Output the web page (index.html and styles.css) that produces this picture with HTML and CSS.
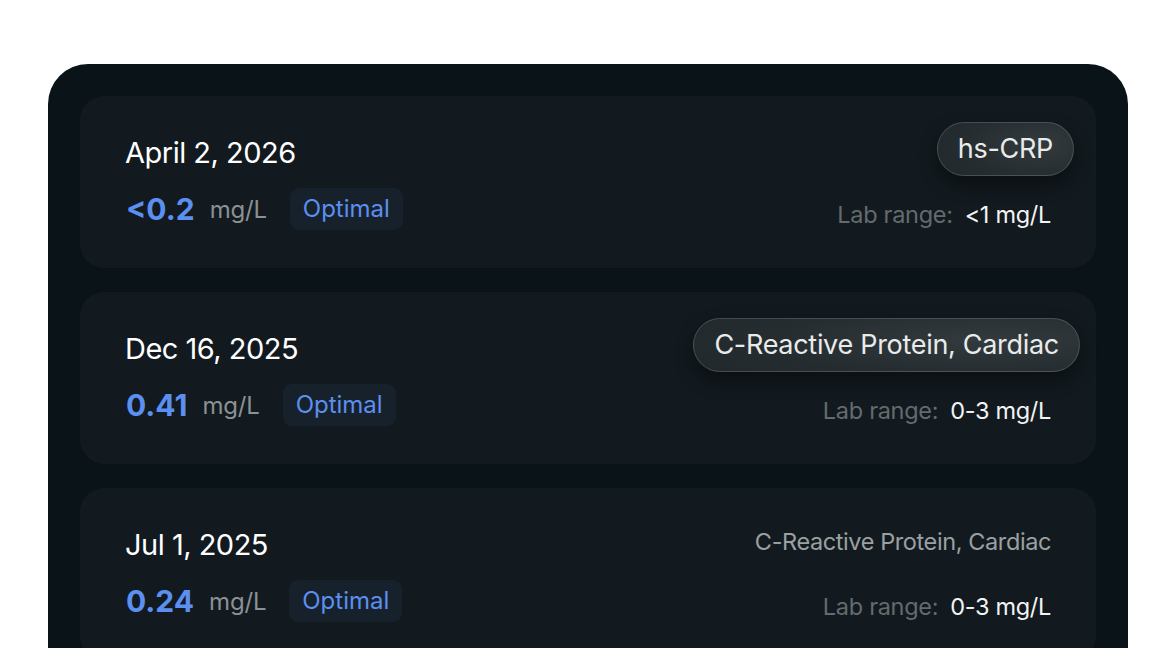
FILE: index.html
```html
<!DOCTYPE html>
<html lang="en">
<head>
<meta charset="utf-8">
<title>hs-CRP history</title>
<link rel="stylesheet" href="styles.css">
</head>
<body>
<main class="panel">
  <section class="card">
    <div class="left">
      <div class="date">April 2, 2026</div>
      <div class="reading">
        <span class="value">&lt;0.2</span>
        <span class="unit">mg/L</span>
        <span class="status">Optimal</span>
      </div>
    </div>
    <div class="right">
      <div class="name-slot"><span class="pill pill-short">hs-CRP</span></div>
      <div class="range"><span class="range-label">Lab range:</span><span class="range-value">&lt;1 mg/L</span></div>
    </div>
  </section>
  <section class="card">
    <div class="left">
      <div class="date">Dec 16, 2025</div>
      <div class="reading">
        <span class="value">0.41</span>
        <span class="unit">mg/L</span>
        <span class="status">Optimal</span>
      </div>
    </div>
    <div class="right">
      <div class="name-slot"><span class="pill pill-long">C-Reactive Protein, Cardiac</span></div>
      <div class="range"><span class="range-label">Lab range:</span><span class="range-value">0-3 mg/L</span></div>
    </div>
  </section>
  <section class="card">
    <div class="left">
      <div class="date">Jul 1, 2025</div>
      <div class="reading">
        <span class="value">0.24</span>
        <span class="unit">mg/L</span>
        <span class="status">Optimal</span>
      </div>
    </div>
    <div class="right">
      <div class="name-slot"><span class="name">C-Reactive Protein, Cardiac</span></div>
      <div class="range"><span class="range-label">Lab range:</span><span class="range-value">0-3 mg/L</span></div>
    </div>
  </section>
</main>
</body>
</html>
```

FILE: styles.css
```css
* { box-sizing: border-box; }

html, body {
  margin: 0;
  padding: 0;
  background: #ffffff;
  overflow: hidden;
  height: 648px;
}

body {
  font-family: Inter, "Noto Sans", "Liberation Sans", sans-serif;
  padding: 64px 48px 0;
}

.panel {
  background: #0a1317;
  border-radius: 40px 40px 0 0;
  padding: 32px;
  display: flex;
  flex-direction: column;
  gap: 24px;
  min-height: 700px;
}

.card {
  background: #121a1f;
  border-radius: 24px;
  height: 172px;
  flex: none;
  padding: 0 45px;
  display: flex;
  justify-content: space-between;
}

.left {
  padding-top: 39px;
  display: flex;
  flex-direction: column;
}

.date {
  color: #ffffff;
  font-size: 29px;
  font-weight: 400;
  line-height: 36px;
  letter-spacing: -0.5px;
}

.reading {
  margin-top: 17px;
  display: flex;
  align-items: center;
  height: 42px;
}

.value {
  color: #5b8ff0;
  font-size: 30px;
  font-weight: 700;
  letter-spacing: 0;
  margin-left: 1px;
}

.unit {
  color: #8b9194;
  font-size: 24px;
  margin-left: 15px;
  letter-spacing: -0.2px;
}

.status {
  margin-left: 23px;
  background: #17212b;
  color: #5b8ff0;
  font-size: 24px;
  height: 42px;
  line-height: 42px;
  padding: 0 13px;
  border-radius: 9px;
}

.right {
  padding-top: 26px;
  display: flex;
  flex-direction: column;
  align-items: flex-end;
}

.name-slot {
  height: 54px;
  display: flex;
  align-items: center;
  justify-content: flex-end;
}

.pill {
  height: 54px;
  line-height: 52px;
  padding: 0 20px;
  border-radius: 27px;
  font-size: 27px;
  color: #e9ebeb;
  letter-spacing: -0.3px;
  background: radial-gradient(120% 140% at 75% 40%, #323a3d 0%, #262d30 45%, #1d2427 100%);
  border: 1px solid rgba(255, 255, 255, 0.16);
  box-shadow: 0 8px 18px rgba(0, 0, 0, 0.45);
}

.pill-short { margin-right: -23px; }
.pill-long { margin-right: -29px; }

.name {
  color: #9ba0a2;
  font-size: 23.5px;
  letter-spacing: -0.4px;
}

.range {
  margin-top: 25px;
  font-size: 23.5px;
  line-height: 28px;
  letter-spacing: -0.3px;
}

.range-label {
  color: #646b6e;
  margin-right: 12px;
}

.range-value {
  color: #f2f3f3;
}
```
